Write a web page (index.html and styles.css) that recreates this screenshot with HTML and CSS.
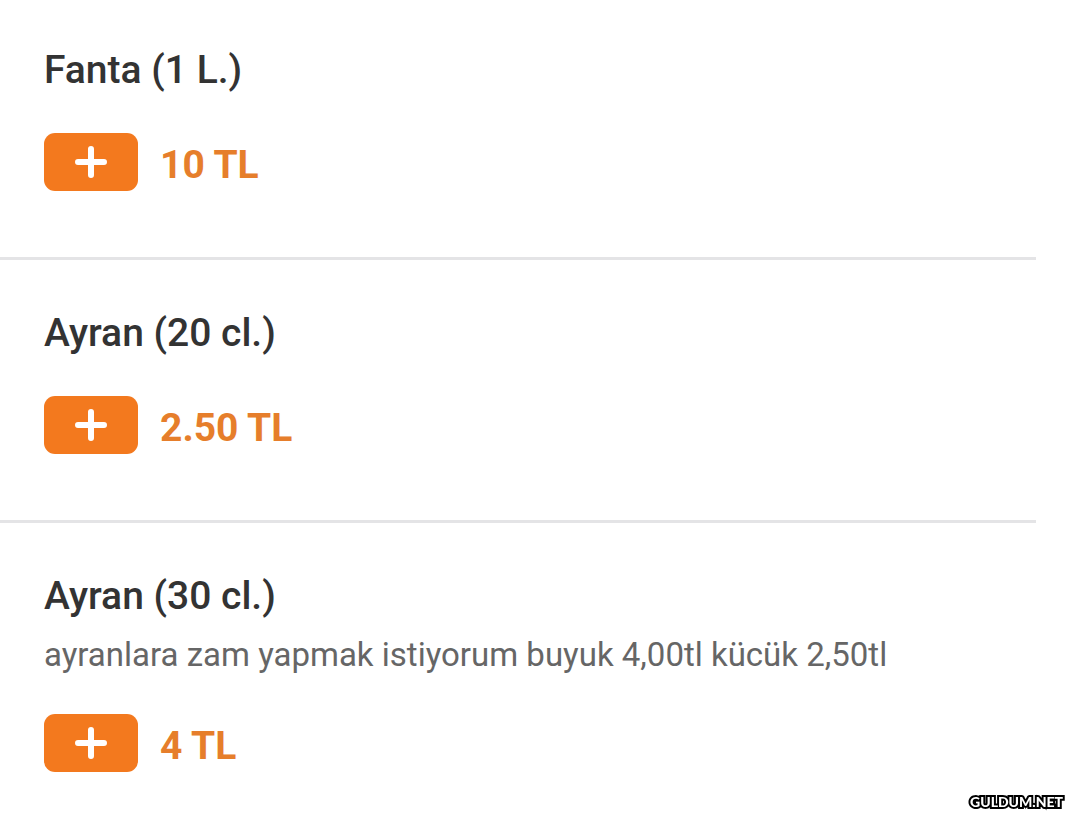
FILE: index.html
```html
<!DOCTYPE html>
<html lang="tr">
<head>
  <meta charset="UTF-8">
  <meta name="viewport" content="width=device-width, initial-scale=1.0">
  <title>İçecekler</title>
  <link rel="stylesheet" href="styles.css">
</head>
<body>
  <main class="menu-list">
    <section class="menu-item">
      <h2 class="item-name">Fanta (1 L.)</h2>
      <div class="item-order">
        <button type="button" class="add-btn" aria-label="Fanta (1 L.) ekle">
          <svg class="plus" viewBox="0 0 32 32"><path d="M16 3V29M3 16H29"/></svg>
        </button>
        <span class="price">10 TL</span>
      </div>
    </section>

    <section class="menu-item">
      <h2 class="item-name">Ayran (20 cl.)</h2>
      <div class="item-order">
        <button type="button" class="add-btn" aria-label="Ayran (20 cl.) ekle">
          <svg class="plus" viewBox="0 0 32 32"><path d="M16 3V29M3 16H29"/></svg>
        </button>
        <span class="price">2.50 TL</span>
      </div>
    </section>

    <section class="menu-item">
      <h2 class="item-name">Ayran (30 cl.)</h2>
      <p class="item-desc">ayranlara zam yapmak istiyorum buyuk 4,00tl kücük 2,50tl</p>
      <div class="item-order">
        <button type="button" class="add-btn" aria-label="Ayran (30 cl.) ekle">
          <svg class="plus" viewBox="0 0 32 32"><path d="M16 3V29M3 16H29"/></svg>
        </button>
        <span class="price">4 TL</span>
      </div>
    </section>
  </main>

  <div class="watermark">GULDUM.NET</div>
</body>
</html>
```

FILE: styles.css
```css
* {
  box-sizing: border-box;
}

body {
  margin: 0;
  background-color: #fff;
  font-family: Roboto, Arial, sans-serif;
}

.menu-list {
  margin-right: 33px;
}

.menu-item {
  padding: 49px 44px 66px;
  border-bottom: 3px solid #e4e4e6;
}

.menu-item:first-child {
  padding-top: 46px;
}

.menu-item:last-child {
  padding-bottom: 0;
  border-bottom: none;
}

.item-name {
  margin: 0;
  font-size: 39px;
  line-height: 48px;
  font-weight: 500;
  color: #333;
}

.item-desc {
  margin: 15px 0 0;
  font-size: 33px;
  line-height: 40px;
  color: #666;
}

.item-order {
  display: flex;
  align-items: center;
  gap: 22px;
  margin-top: 39px;
}

.add-btn {
  display: flex;
  align-items: center;
  justify-content: center;
  width: 94px;
  height: 58px;
  padding: 0;
  border: none;
  border-radius: 11px;
  background-color: #f3791e;
  cursor: pointer;
}

.plus {
  width: 32px;
  height: 32px;
  fill: none;
  stroke: #fff;
  stroke-width: 6;
  stroke-linecap: round;
}

.price {
  padding-top: 6px;
  font-size: 39px;
  line-height: 48px;
  font-weight: 700;
  color: #e67e2b;
}

.watermark {
  position: fixed;
  right: 6px;
  bottom: 3px;
  font-family: Lato, Arial, sans-serif;
  font-size: 14px;
  line-height: 18px;
  font-weight: 900;
  color: #fff;
  -webkit-text-stroke: 4px #000;
  paint-order: stroke fill;
}
```
